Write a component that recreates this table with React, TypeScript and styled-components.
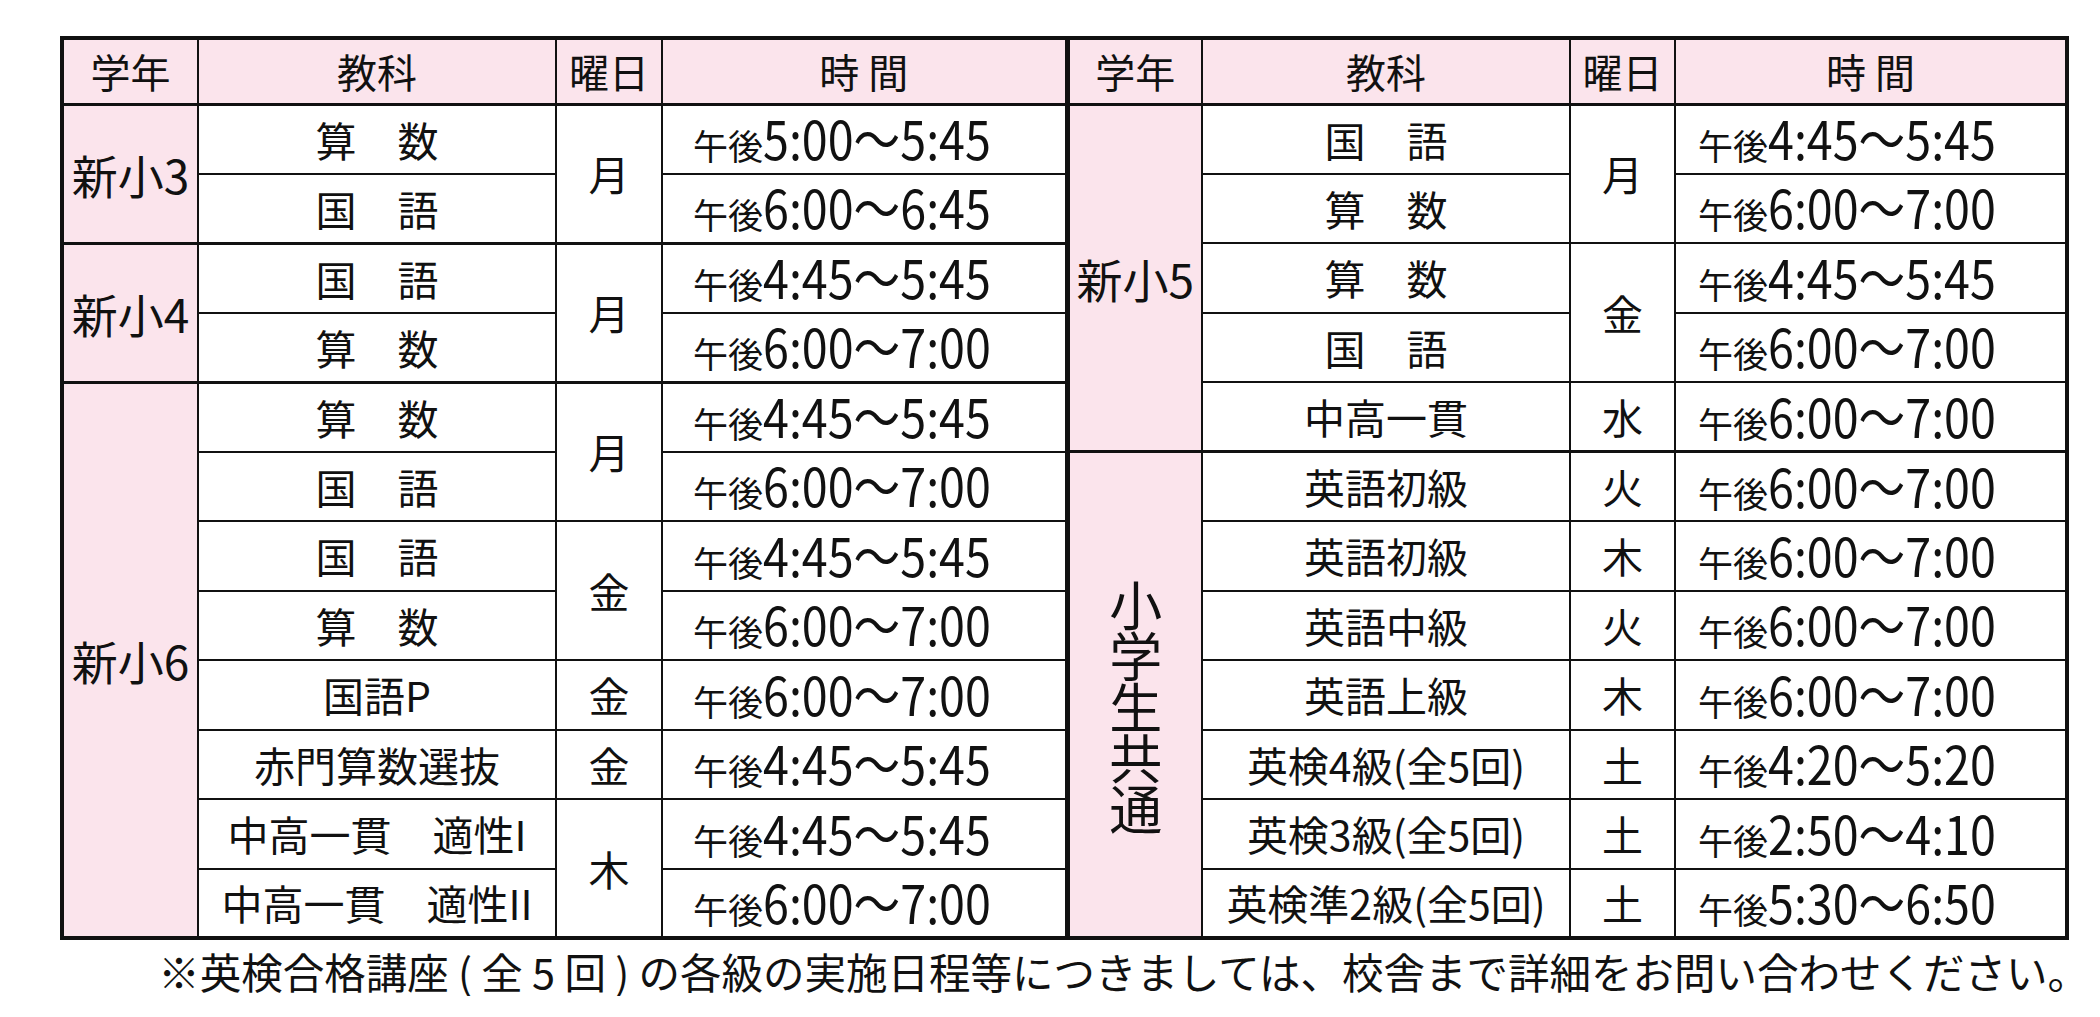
import styled, { createGlobalStyle } from "styled-components";

type Row = {
  grade?: [string, number];
  vertical?: boolean;
  subject: string;
  day?: [string, number];
  time: string;
  groupStart?: boolean;
};

const leftRows: Row[] = [
  { grade: ["新小3", 2], subject: "算　数", day: ["月", 2], time: "5:00〜5:45", groupStart: true },
  { subject: "国　語", time: "6:00〜6:45" },
  { grade: ["新小4", 2], subject: "国　語", day: ["月", 2], time: "4:45〜5:45", groupStart: true },
  { subject: "算　数", time: "6:00〜7:00" },
  { grade: ["新小6", 8], subject: "算　数", day: ["月", 2], time: "4:45〜5:45", groupStart: true },
  { subject: "国　語", time: "6:00〜7:00" },
  { subject: "国　語", day: ["金", 2], time: "4:45〜5:45" },
  { subject: "算　数", time: "6:00〜7:00" },
  { subject: "国語P", day: ["金", 1], time: "6:00〜7:00" },
  { subject: "赤門算数選抜", day: ["金", 1], time: "4:45〜5:45" },
  { subject: "中高一貫　適性I", day: ["木", 2], time: "4:45〜5:45" },
  { subject: "中高一貫　適性II", time: "6:00〜7:00" },
];

const rightRows: Row[] = [
  { grade: ["新小5", 5], subject: "国　語", day: ["月", 2], time: "4:45〜5:45", groupStart: true },
  { subject: "算　数", time: "6:00〜7:00" },
  { subject: "算　数", day: ["金", 2], time: "4:45〜5:45" },
  { subject: "国　語", time: "6:00〜7:00" },
  { subject: "中高一貫", day: ["水", 1], time: "6:00〜7:00" },
  { grade: ["小学生共通", 7], vertical: true, subject: "英語初級", day: ["火", 1], time: "6:00〜7:00", groupStart: true },
  { subject: "英語初級", day: ["木", 1], time: "6:00〜7:00" },
  { subject: "英語中級", day: ["火", 1], time: "6:00〜7:00" },
  { subject: "英語上級", day: ["木", 1], time: "6:00〜7:00" },
  { subject: "英検4級(全5回)", day: ["土", 1], time: "4:20〜5:20" },
  { subject: "英検3級(全5回)", day: ["土", 1], time: "2:50〜4:10" },
  { subject: "英検準2級(全5回)", day: ["土", 1], time: "5:30〜6:50" },
];

const colWidths = [136, 358, 106, 405, 135, 368, 105, 392];

function App() {
  return (
    <>
      <GlobalStyle />
      <Page>
        <Schedule>
          <colgroup>
            {colWidths.map((w, i) => (
              <Col key={i} $w={w} />
            ))}
          </colgroup>
          <thead>
            <HeadRow>
              <Th>学年</Th>
              <Th>教科</Th>
              <Th>曜日</Th>
              <Th>時 間</Th>
              <Th $divider>学年</Th>
              <Th>教科</Th>
              <Th>曜日</Th>
              <Th>時 間</Th>
            </HeadRow>
          </thead>
          <tbody>
            {leftRows.map((l, i) => (
              <BodyRow key={i}>
                <Side row={l} />
                <Side row={rightRows[i]} divider />
              </BodyRow>
            ))}
          </tbody>
        </Schedule>
        <Note>※英検合格講座 ( 全 5 回 ) の各級の実施日程等につきましては、校舎まで詳細をお問い合わせください。</Note>
      </Page>
    </>
  );
}

function Side({ row, divider }: { row: Row; divider?: boolean }) {
  const thick = !!row.groupStart;
  return (
    <>
      {row.grade && (
        <GradeCell rowSpan={row.grade[1]} $thick={thick} $divider={divider}>
          {row.vertical ? <Vertical>{row.grade[0]}</Vertical> : row.grade[0]}
        </GradeCell>
      )}
      <SubjectCell $thick={thick}>{row.subject}</SubjectCell>
      {row.day && (
        <DayCell rowSpan={row.day[1]} $thick={thick}>
          {row.day[0]}
        </DayCell>
      )}
      <TimeCell $thick={thick} $inset={divider ? 22 : 30}>
        <Prefix>午後</Prefix>
        <Digits>{row.time}</Digits>
      </TimeCell>
    </>
  );
}

const GlobalStyle = createGlobalStyle`
  body {
    margin: 0;
    background: #fff;
    color: #111;
    font-family: "Noto Sans CJK JP", "Noto Sans", sans-serif;
  }
`;

const Page = styled.div`
  display: flex;
  flex-direction: column;
  width: 2009px;
  padding: 36px 0 0 60px;
`;

const Schedule = styled.table`
  border-collapse: collapse;
  table-layout: fixed;
  width: 2005px;
  border: 4px solid #111;
`;

const Col = styled.col<{ $w: number }>`
  width: ${(p) => p.$w}px;
`;

const HeadRow = styled.tr`
  height: 66px;
`;

const BodyRow = styled.tr`
  height: 69.5px;
`;

const Cell = styled.td<{ $thick?: boolean; $divider?: boolean }>`
  padding: 0;
  border: 2px solid #111;
  border-top-width: ${(p) => (p.$thick ? "3px" : "2px")};
  border-left-width: ${(p) => (p.$divider ? "5px" : "2px")};
  text-align: center;
  vertical-align: middle;
  line-height: 1;
  white-space: nowrap;
  font-weight: 400;
`;

const Th = styled(Cell).attrs({ as: "th" })`
  background: #fbe4ec;
  font-size: 40px;
  border-bottom-width: 3px;
`;

const GradeCell = styled(Cell)`
  background: #fbe4ec;
  font-size: 46px;
`;

const Vertical = styled.span`
  display: inline-block;
  writing-mode: vertical-rl;
  font-size: 53px;
  letter-spacing: -2px;
  padding-top: 26px;
`;

const SubjectCell = styled(Cell)`
  font-size: 41px;
`;

const DayCell = styled(Cell)`
  font-size: 41px;
`;

const TimeCell = styled(Cell)<{ $inset: number }>`
  text-align: left;
  padding: 0 0 3px ${(p) => p.$inset}px;
`;

const Prefix = styled.span`
  font-size: 35px;
`;

const Digits = styled.span`
  display: inline-block;
  font-size: 53px;
  transform: scaleX(0.88);
  transform-origin: left center;
`;

const Note = styled.div`
  margin: 6px -20px 0 0;
  text-align: right;
  font-size: 41.5px;
  line-height: 50px;
`;

export default App;
